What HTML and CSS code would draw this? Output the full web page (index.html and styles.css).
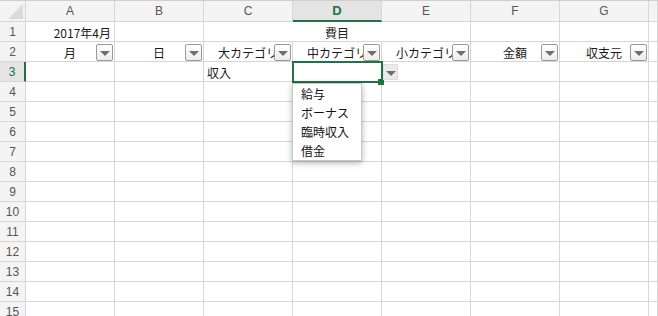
FILE: index.html
```html
<!DOCTYPE html>
<html lang="ja">
  <head>
    <meta charset="UTF-8" />
    <title>家計簿</title>
    <link rel="stylesheet" href="styles.css">
  </head>

  <body>
    <div class="sheet">
      <div class="row head">
        <div class="corner"></div>
        <div class="col-name">A</div>
        <div class="col-name">B</div>
        <div class="col-name">C</div>
        <div class="col-name active">D</div>
        <div class="col-name">E</div>
        <div class="col-name">F</div>
        <div class="col-name">G</div>
        <div class="col-name"></div>
      </div>

      <div class="row">
        <div class="row-name">1</div>
        <div class="cell right">2017年4月</div>
        <div class="cell"></div>
        <div class="cell center merged">費目</div>
        <div class="cell"></div>
        <div class="cell"></div>
        <div class="cell"></div>
      </div>

      <div class="row">
        <div class="row-name">2</div>
        <div class="cell center">月<span class="filter"></span></div>
        <div class="cell center">日<span class="filter"></span></div>
        <div class="cell center">大カテゴリ<span class="filter"></span></div>
        <div class="cell center">中カテゴリ<span class="filter"></span></div>
        <div class="cell center">小カテゴリ<span class="filter"></span></div>
        <div class="cell center">金額<span class="filter"></span></div>
        <div class="cell center">収支元<span class="filter"></span></div>
        <div class="cell"></div>
      </div>

      <div class="row">
        <div class="row-name active">3</div>
        <div class="cell"></div>
        <div class="cell"></div>
        <div class="cell">収入</div>
        <div class="cell"></div>
        <div class="cell"></div>
        <div class="cell"></div>
        <div class="cell"></div>
        <div class="cell"></div>
      </div>

      <div class="row"><div class="row-name">4</div><div class="cell"></div><div class="cell"></div><div class="cell"></div><div class="cell"></div><div class="cell"></div><div class="cell"></div><div class="cell"></div><div class="cell"></div></div>
      <div class="row"><div class="row-name">5</div><div class="cell"></div><div class="cell"></div><div class="cell"></div><div class="cell"></div><div class="cell"></div><div class="cell"></div><div class="cell"></div><div class="cell"></div></div>
      <div class="row"><div class="row-name">6</div><div class="cell"></div><div class="cell"></div><div class="cell"></div><div class="cell"></div><div class="cell"></div><div class="cell"></div><div class="cell"></div><div class="cell"></div></div>
      <div class="row"><div class="row-name">7</div><div class="cell"></div><div class="cell"></div><div class="cell"></div><div class="cell"></div><div class="cell"></div><div class="cell"></div><div class="cell"></div><div class="cell"></div></div>
      <div class="row"><div class="row-name">8</div><div class="cell"></div><div class="cell"></div><div class="cell"></div><div class="cell"></div><div class="cell"></div><div class="cell"></div><div class="cell"></div><div class="cell"></div></div>
      <div class="row"><div class="row-name">9</div><div class="cell"></div><div class="cell"></div><div class="cell"></div><div class="cell"></div><div class="cell"></div><div class="cell"></div><div class="cell"></div><div class="cell"></div></div>
      <div class="row"><div class="row-name">10</div><div class="cell"></div><div class="cell"></div><div class="cell"></div><div class="cell"></div><div class="cell"></div><div class="cell"></div><div class="cell"></div><div class="cell"></div></div>
      <div class="row"><div class="row-name">11</div><div class="cell"></div><div class="cell"></div><div class="cell"></div><div class="cell"></div><div class="cell"></div><div class="cell"></div><div class="cell"></div><div class="cell"></div></div>
      <div class="row"><div class="row-name">12</div><div class="cell"></div><div class="cell"></div><div class="cell"></div><div class="cell"></div><div class="cell"></div><div class="cell"></div><div class="cell"></div><div class="cell"></div></div>
      <div class="row"><div class="row-name">13</div><div class="cell"></div><div class="cell"></div><div class="cell"></div><div class="cell"></div><div class="cell"></div><div class="cell"></div><div class="cell"></div><div class="cell"></div></div>
      <div class="row"><div class="row-name">14</div><div class="cell"></div><div class="cell"></div><div class="cell"></div><div class="cell"></div><div class="cell"></div><div class="cell"></div><div class="cell"></div><div class="cell"></div></div>
      <div class="row"><div class="row-name">15</div><div class="cell"></div><div class="cell"></div><div class="cell"></div><div class="cell"></div><div class="cell"></div><div class="cell"></div><div class="cell"></div><div class="cell"></div></div>

      <!-- セル選択とリスト -->
      <div class="selection"><span class="handle"></span></div>
      <div class="list-button"></div>
      <ul class="list">
        <li>給与</li>
        <li>ボーナス</li>
        <li>臨時収入</li>
        <li>借金</li>
      </ul>
    </div>
  </body>
</html>
```

FILE: styles.css
```css
* {
  margin: 0;
  padding: 0;
  box-sizing: border-box;
}

body {
  background-color: #fff;
  font-family: "Noto Sans CJK JP", sans-serif;
  font-size: 12px;
  color: #1a1a1a;
  overflow: hidden;
}

.sheet {
  position: relative;
  width: 658px;
}

.row {
  display: grid;
  grid-template-columns: 26px repeat(7, 89px) 1fr;
  height: 20px;
}

.row.head {
  height: 22px;
  border-top: 1px solid #cfcfcf;
}

.row > div {
  border-right: 1px solid #d6d6d6;
  border-bottom: 1px solid #d6d6d6;
}

.corner {
  position: relative;
  background-color: #f4f4f4;
}

.corner::after {
  content: "";
  position: absolute;
  right: 2px;
  bottom: 2px;
  width: 15px;
  height: 15px;
  background-color: #dadada;
  clip-path: polygon(100% 0, 100% 100%, 0 100%);
}

.col-name,
.row-name {
  font-family: "Liberation Sans", sans-serif;
  font-size: 12px;
  color: #555;
  background-color: #f4f4f4;
  display: flex;
  align-items: center;
  justify-content: center;
}

.col-name.active {
  color: #217346;
  font-weight: bold;
  font-size: 13px;
  background-color: #e4e4e4;
  border-bottom: 2px solid #217346 !important;
}

.row-name.active {
  color: #217346;
  background-color: #e4e4e4;
  border-right: 2px solid #217346 !important;
}

.cell {
  position: relative;
  display: flex;
  align-items: center;
  padding: 1px 3px 0;
  white-space: nowrap;
}

.cell.right {
  justify-content: flex-end;
}

.cell.center {
  justify-content: center;
}

.cell.merged {
  grid-column: span 3;
}

.filter {
  position: absolute;
  right: 1px;
  top: 2px;
  width: 17px;
  height: 17px;
  border: 1px solid #9a9a9a;
  border-radius: 2px;
  background: linear-gradient(#ffffff, #ececec);
}

.filter::after,
.list-button::after {
  content: "";
  position: absolute;
  left: 3px;
  top: 6px;
  border-left: 5px solid transparent;
  border-right: 5px solid transparent;
  border-top: 5px solid #6e6e6e;
}

.selection {
  position: absolute;
  left: 292px;
  top: 61px;
  width: 91px;
  height: 22px;
  border: 2px solid #217346;
}

.handle {
  position: absolute;
  right: -3px;
  bottom: -4px;
  width: 6px;
  height: 6px;
  background-color: #217346;
}

.list-button {
  position: absolute;
  left: 383px;
  top: 64px;
  width: 15px;
  height: 16px;
  background-color: #ebebeb;
  border: 1px solid #dedede;
}

.list-button::after {
  left: 2px;
  border-left-width: 5px;
  border-right-width: 5px;
}

.list {
  position: absolute;
  left: 292px;
  top: 83px;
  width: 70px;
  list-style: none;
  background-color: #fff;
  border: 1px solid #c9c9c9;
  box-shadow: 0 2px 6px rgba(0, 0, 0, 0.3);
}

.list li {
  height: 19px;
  line-height: 19px;
  padding-left: 8px;
  font-size: 12px;
  color: #111;
}
```
